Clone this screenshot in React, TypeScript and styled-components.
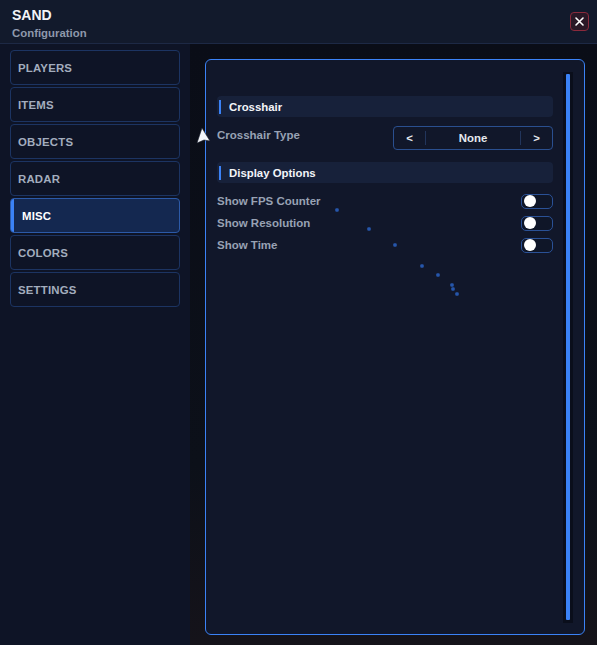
import * as React from 'react';
import styled, { createGlobalStyle } from 'styled-components';

const GlobalStyle = createGlobalStyle`
  html, body {
    margin: 0;
    padding: 0;
    background: #0a0d16;
  }
  body {
    font-family: 'Liberation Sans', Arial, sans-serif;
  }
`;

const Window = styled.div`
  width: 597px;
  height: 645px;
  display: flex;
  flex-direction: column;
  background: #0b0f1a;
  position: relative;
  overflow: hidden;
`;

const Header = styled.div`
  height: 43px;
  flex-shrink: 0;
  display: flex;
  align-items: center;
  justify-content: space-between;
  padding: 0 8px 0 12px;
  background: #121a2c;
  border-bottom: 1px solid #1d2945;
`;

const TitleBlock = styled.div`
  display: flex;
  flex-direction: column;
  gap: 4px;
  margin-top: 3px;
`;

const Title = styled.div`
  color: #f2f4f8;
  font-size: 14px;
  font-weight: 700;
  line-height: 16px;
`;

const Subtitle = styled.div`
  color: #8e98ab;
  font-size: 11.4px;
  font-weight: 700;
  line-height: 13px;
`;

const CloseButton = styled.button`
  width: 19px;
  height: 19px;
  margin-top: -1px;
  padding: 0;
  display: flex;
  align-items: center;
  justify-content: center;
  border: 1px solid #8a2a3c;
  border-radius: 4px;
  background: #2a1826;
  color: #ffffff;
`;

const Body = styled.div`
  flex: 1;
  display: flex;
  min-height: 0;
`;

const Sidebar = styled.nav`
  width: 190px;
  flex-shrink: 0;
  box-sizing: border-box;
  padding: 6px 10px;
  display: flex;
  flex-direction: column;
  gap: 2px;
  background: #0e1426;
`;

const NavItem = styled.div<{ $active?: boolean }>`
  position: relative;
  height: 35px;
  box-sizing: border-box;
  display: flex;
  align-items: center;
  padding-left: ${p => (p.$active ? '11px' : '7px')};
  border: 1px solid ${p => (p.$active ? '#2c5aa8' : '#1c3462')};
  border-radius: 4px;
  background: ${p => (p.$active ? '#142850' : 'transparent')};
  color: ${p => (p.$active ? '#ffffff' : '#a3adbe')};
  font-size: 11.4px;
  font-weight: 700;
  letter-spacing: 0.2px;
  overflow: hidden;

  &::before {
    content: '';
    display: ${p => (p.$active ? 'block' : 'none')};
    position: absolute;
    left: 0;
    top: 0;
    bottom: 0;
    width: 3px;
    background: #3b82f6;
  }
`;

const Main = styled.main`
  flex: 1;
  display: flex;
  padding: 15px 12px 10px 15px;
  background: linear-gradient(180deg, #0a0d17 0%, #0c1019 70%, #15131a 100%);
`;

const Panel = styled.section`
  flex: 1;
  display: flex;
  border: 1px solid #3b82f6;
  border-radius: 6px;
  background: #11172a;
`;

const Content = styled.div`
  flex: 1;
  display: flex;
  flex-direction: column;
  padding: 36px 0 0 11px;
`;

const ScrollTrack = styled.div`
  width: 10px;
  margin: 12px 11px 11px 10px;
  padding: 2px 3px 3px;
  box-sizing: border-box;
  background: #0a0e1b;
`;

const ScrollThumb = styled.div`
  height: 100%;
  background: #3b82f6;
  border-radius: 1px;
`;

const SectionHeader = styled.div`
  height: 21px;
  display: flex;
  align-items: center;
  gap: 8px;
  padding-left: 2px;
  border-radius: 4px;
  background: #17213a;
  color: #f2f4f8;
  font-size: 11.4px;
  font-weight: 700;

  &::before {
    content: '';
    width: 2px;
    height: 14px;
    background: #3b82f6;
  }
`;

const Row = styled.div`
  height: 22px;
  display: flex;
  align-items: center;
  justify-content: space-between;
  color: #98a2b4;
  font-size: 11.5px;
  font-weight: 700;
`;

const SelectRow = styled(Row)`
  height: 24px;
  align-items: flex-start;
  margin: 9px 0 12px;

  & > span {
    margin-top: 3px;
  }
`;

const OptionRows = styled.div`
  padding-top: 7px;
  display: flex;
  flex-direction: column;
`;

const Selector = styled.div`
  width: 160px;
  height: 24px;
  box-sizing: border-box;
  display: flex;
  align-items: center;
  border: 1px solid #2a4f8f;
  border-radius: 4px;
  color: #e6e9ef;
  font-size: 11.4px;
  font-weight: 700;
`;

const Arrow = styled.span`
  width: 31px;
  height: 14px;
  display: flex;
  align-items: center;
  justify-content: center;
`;

const SelectorValue = styled.span`
  flex: 1;
  height: 14px;
  display: flex;
  align-items: center;
  justify-content: center;
  border-left: 1px solid #22355c;
  border-right: 1px solid #22355c;
`;

const Toggle = styled.div<{ $on?: boolean }>`
  width: 32px;
  height: 15px;
  box-sizing: border-box;
  display: flex;
  align-items: center;
  justify-content: ${p => (p.$on ? 'flex-end' : 'flex-start')};
  padding: 0 2px;
  border: 1px solid #2a5196;
  border-radius: 5px;
  background: ${p => (p.$on ? '#1d4ed8' : '#0f1628')};
`;

const Knob = styled.span`
  width: 12px;
  height: 12px;
  border-radius: 50%;
  background: #ffffff;
`;

const Overlay = styled.svg`
  position: absolute;
  left: 0;
  top: 0;
  pointer-events: none;
`;

const navItems = ['Players', 'Items', 'Objects', 'Radar', 'Misc', 'Colors', 'Settings'];
const toggles = ['Show FPS Counter', 'Show Resolution', 'Show Time'];

// cursor trail left behind while moving across the panel
const trail: [number, number][] = [
  [337, 210],
  [369, 229],
  [395, 245],
  [422, 266],
  [438, 275],
  [452, 285],
  [453, 289],
  [457, 294],
];

const App = () => {
  return (
    <Window>
      <GlobalStyle />
      <Header>
        <TitleBlock>
          <Title>SAND</Title>
          <Subtitle>Configuration</Subtitle>
        </TitleBlock>
        <CloseButton>
          <svg width="11" height="11" viewBox="0 0 11 11">
            <path d="M2 2 L9 9 M9 2 L2 9" stroke="#fff" strokeWidth="1.6" strokeLinecap="round" />
          </svg>
        </CloseButton>
      </Header>

      <Body>
        <Sidebar>
          {navItems.map(name => (
            <NavItem key={name} $active={name === 'Misc'}>
              {name.toUpperCase()}
            </NavItem>
          ))}
        </Sidebar>

        <Main>
          <Panel>
            <Content>
              <SectionHeader>Crosshair</SectionHeader>
              <SelectRow>
                <span>Crosshair Type</span>
                <Selector>
                  <Arrow>&lt;</Arrow>
                  <SelectorValue>None</SelectorValue>
                  <Arrow>&gt;</Arrow>
                </Selector>
              </SelectRow>
              <SectionHeader>Display Options</SectionHeader>
              <OptionRows>
                {toggles.map(label => (
                  <Row key={label}>
                    <span>{label}</span>
                    <Toggle>
                      <Knob />
                    </Toggle>
                  </Row>
                ))}
              </OptionRows>
            </Content>
            <ScrollTrack>
              <ScrollThumb />
            </ScrollTrack>
          </Panel>
        </Main>
      </Body>

      <Overlay width="597" height="645">
        {trail.map(([x, y], i) => (
          <rect key={i} x={x - 1.75} y={y - 1.75} width="3.5" height="3.5" rx="1.2" fill="#2656ab" />
        ))}
        <path d="M202 128 L210 141 L204 140 L197 143 Z" fill="#f4f6fa" stroke="#1a1f2c" strokeWidth="0.6" />
      </Overlay>
    </Window>
  );
};

export default App;
